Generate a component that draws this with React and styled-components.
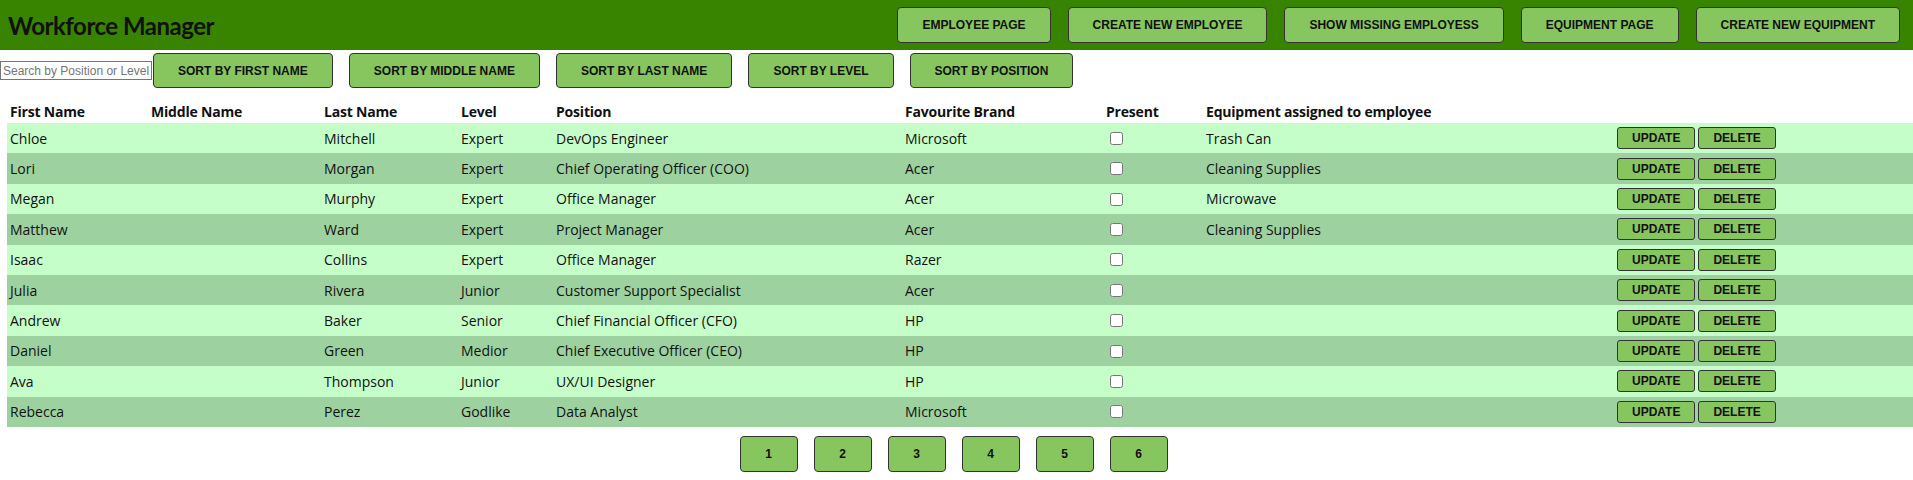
import React, { useState } from "react";
import styled, { createGlobalStyle } from "styled-components";

const employees = [
  { first: "Chloe", middle: "", last: "Mitchell", level: "Expert", position: "DevOps Engineer", brand: "Microsoft", equipment: "Trash Can" },
  { first: "Lori", middle: "", last: "Morgan", level: "Expert", position: "Chief Operating Officer (COO)", brand: "Acer", equipment: "Cleaning Supplies" },
  { first: "Megan", middle: "", last: "Murphy", level: "Expert", position: "Office Manager", brand: "Acer", equipment: "Microwave" },
  { first: "Matthew", middle: "", last: "Ward", level: "Expert", position: "Project Manager", brand: "Acer", equipment: "Cleaning Supplies" },
  { first: "Isaac", middle: "", last: "Collins", level: "Expert", position: "Office Manager", brand: "Razer", equipment: "" },
  { first: "Julia", middle: "", last: "Rivera", level: "Junior", position: "Customer Support Specialist", brand: "Acer", equipment: "" },
  { first: "Andrew", middle: "", last: "Baker", level: "Senior", position: "Chief Financial Officer (CFO)", brand: "HP", equipment: "" },
  { first: "Daniel", middle: "", last: "Green", level: "Medior", position: "Chief Executive Officer (CEO)", brand: "HP", equipment: "" },
  { first: "Ava", middle: "", last: "Thompson", level: "Junior", position: "UX/UI Designer", brand: "HP", equipment: "" },
  { first: "Rebecca", middle: "", last: "Perez", level: "Godlike", position: "Data Analyst", brand: "Microsoft", equipment: "" },
];

const navLinks = ["EMPLOYEE PAGE", "CREATE NEW EMPLOYEE", "SHOW MISSING EMPLOYESS", "EQUIPMENT PAGE", "CREATE NEW EQUIPMENT"];
const sorters = ["SORT BY FIRST NAME", "SORT BY MIDDLE NAME", "SORT BY LAST NAME", "SORT BY LEVEL", "SORT BY POSITION"];
const columns = [
  { title: "First Name", width: 141 },
  { title: "Middle Name", width: 173 },
  { title: "Last Name", width: 137 },
  { title: "Level", width: 95 },
  { title: "Position", width: 349 },
  { title: "Favourite Brand", width: 201 },
  { title: "Present", width: 100 },
  { title: "Equipment assigned to employee", width: 411 },
  { title: "", width: null },
];

function App() {
  const [page, setPage] = useState(1);

  return (
    <>
      <GlobalStyle />
      <Header>
        <Title>Workforce Manager</Title>
        <Nav>
          {navLinks.map((label) => (
            <GreenButton key={label} $tall>
              {label}
            </GreenButton>
          ))}
        </Nav>
      </Header>

      {/* search + sorting */}
      <Toolbar>
        <Search placeholder="Search by Position or Level" />
        <SortGroup>
          {sorters.map((label) => (
            <GreenButton key={label}>{label}</GreenButton>
          ))}
        </SortGroup>
      </Toolbar>

      <Table>
        <colgroup>
          {columns.map((c, i) => (
            <col key={i} style={c.width ? { width: c.width } : undefined} />
          ))}
        </colgroup>
        <thead>
          <tr>
            {columns.map((c, i) => (
              <Th key={i}>{c.title}</Th>
            ))}
          </tr>
        </thead>
        <tbody>
          {employees.map((e, i) => (
            <Row key={e.first} $odd={i % 2 === 1}>
              <Td>{e.first}</Td>
              <Td>{e.middle}</Td>
              <Td>{e.last}</Td>
              <Td>{e.level}</Td>
              <Td>{e.position}</Td>
              <Td>{e.brand}</Td>
              <Td>
                <Check type="checkbox" />
              </Td>
              <Td>{e.equipment}</Td>
              <Td>
                <Actions>
                  <RowButton>UPDATE</RowButton>
                  <RowButton>DELETE</RowButton>
                </Actions>
              </Td>
            </Row>
          ))}
        </tbody>
      </Table>

      <Pagination>
        {[1, 2, 3, 4, 5, 6].map((n) => (
          <GreenButton key={n} $tall $square onClick={() => setPage(n)}>
            {n}
          </GreenButton>
        ))}
      </Pagination>
    </>
  );
}

export default App;

const GlobalStyle = createGlobalStyle`
  body {
    margin: 0;
    background: #fff;
    color: #111;
    font-family: "Open Sans", "Noto Sans", sans-serif;
  }
`;

const Header = styled.header`
  display: flex;
  align-items: center;
  justify-content: space-between;
  height: 50px;
  padding: 0 13px 0 8px;
  background-color: #388400;
`;

const Title = styled.h1`
  margin: 0;
  font-family: Lato, "Open Sans", sans-serif;
  font-size: 24px;
  font-weight: 700;
  letter-spacing: -0.5px;
  color: #111;
`;

const Nav = styled.nav`
  display: flex;
  gap: 17px;
`;

const GreenButton = styled.button`
  height: ${(p) => (p.$tall ? "36px" : "35px")};
  min-width: ${(p) => (p.$square ? "58px" : "0")};
  padding: 0 24px;
  background-color: #87c55f;
  border: 1px solid #333;
  border-radius: 4px;
  font-family: "Liberation Sans", Arial, sans-serif;
  font-size: 12px;
  font-weight: 700;
  color: #111;
  cursor: pointer;
`;

const Toolbar = styled.div`
  display: flex;
  align-items: center;
  margin-top: 3px;
`;

const Search = styled.input`
  box-sizing: border-box;
  width: 152px;
  height: 19px;
  margin-right: 1px;
  padding: 1px 2px;
  border: 1px solid #767676;
  font-family: "Liberation Sans", Arial, sans-serif;
  font-size: 12px;
  &::placeholder {
    color: #757575;
  }
`;

const SortGroup = styled.div`
  display: flex;
  gap: 16px;
`;

const Table = styled.table`
  width: calc(100% - 7px);
  margin: 12px 0 0 7px;
  border-collapse: collapse;
  table-layout: fixed;
  font-size: 14px;
`;

const Th = styled.th`
  height: 23px;
  padding: 0 3px;
  text-align: left;
  font-weight: 700;
  letter-spacing: -0.2px;
  vertical-align: middle;
`;

const Row = styled.tr`
  background-color: ${(p) => (p.$odd ? "#9dd19f" : "#c6fec9")};
`;

const Td = styled.td`
  height: 30.4px;
  padding: 0 3px;
  vertical-align: middle;
  white-space: nowrap;
`;

const Check = styled.input`
  margin: 0 0 3px 4px;
  vertical-align: middle;
`;

const Actions = styled.div`
  display: flex;
  gap: 3px;
`;

const RowButton = styled.button`
  height: 22px;
  padding: 0 14px;
  background-color: #87c55f;
  border: 1px solid #333;
  border-radius: 3px;
  font-family: "Liberation Sans", Arial, sans-serif;
  font-size: 12px;
  font-weight: 700;
  color: #111;
  cursor: pointer;
`;

const Pagination = styled.div`
  display: flex;
  justify-content: center;
  gap: 16px;
  margin-top: 9px;
  padding-right: 6px;
`;
